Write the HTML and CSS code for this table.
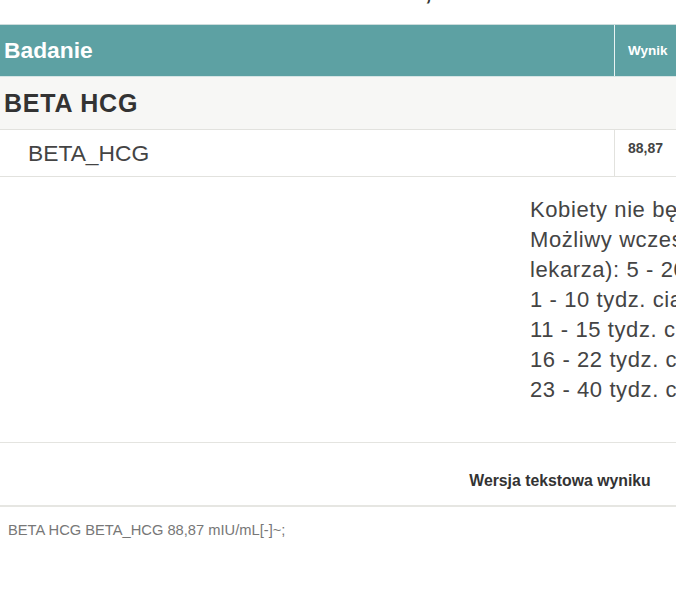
FILE: index.html
```html
<!DOCTYPE html>
<html lang="pl">
<head>
<meta charset="utf-8">
<title>Wynik badania BETA HCG</title>
<link rel="stylesheet" href="styles.css">
</head>
<body>
<div class="page">
  <h1 class="title">Dane badań, BETA HCG</h1>
  <div class="results">
    <div class="row head">
      <div class="cell name">Badanie</div>
      <div class="cell value">Wynik</div>
    </div>
    <div class="row group">
      <div class="cell name">BETA HCG</div>
      <div class="cell value"></div>
    </div>
    <div class="row item">
      <div class="cell name">BETA_HCG</div>
      <div class="cell value">88,87</div>
    </div>
  </div>
  <div class="norms">
    <div class="norm-text">Kobiety nie będące w ciąży: &lt; 5,0<br>Możliwy wczesny okres ciąży (potwierdzić u<br>lekarza): 5 - 20<br>1 - 10 tydz. ciąży: 202 - 231000<br>11 - 15 tydz. ciąży: 22536 - 234990<br>16 - 22 tydz. ciąży: 8007 - 50064<br>23 - 40 tydz. ciąży: 1600 - 49413</div>
  </div>
  <div class="version">Wersja tekstowa wyniku</div>
  <div class="plain">BETA HCG BETA_HCG 88,87 mIU/mL[-]~;</div>
</div>
</body>
</html>
```
FILE: styles.css
```css
html, body {
  margin: 0;
  padding: 0;
  background: #ffffff;
  overflow: hidden;
}
body {
  font-family: "Liberation Sans", Arial, Helvetica, sans-serif;
  color: #444;
}
.page {
  width: 1120px;
}
.title {
  margin: -23px 0 17px 289px;
  font-size: 24px;
  line-height: 30px;
  font-weight: bold;
  color: #333;
  white-space: nowrap;
}
.results {
  border-top: 1px solid #cddcdc;
}
.row {
  display: grid;
  grid-template-columns: 614px 1fr;
}
.cell {
  display: flex;
  align-items: center;
}
.head {
  background: #5da1a3;
  height: 51px;
  border-bottom: 1px solid #d6e5e5;
  color: #fff;
}
.head .name {
  padding-left: 4px;
  font-size: 22.8px;
  font-weight: bold;
}
.head .value {
  border-left: 1px solid #e9f3f3;
  padding-left: 13px;
  font-size: 13.5px;
  font-weight: bold;
}
.group {
  background: #f7f7f5;
  height: 52px;
  border-bottom: 1px solid #e2e2de;
}
.group .name {
  padding-left: 4px;
  font-size: 25px;
  font-weight: bold;
  letter-spacing: 0.8px;
  color: #333;
}
.item {
  height: 46px;
  border-bottom: 1px solid #e2e2de;
}
.item .name {
  padding-left: 28px;
  font-size: 22.8px;
  color: #444;
}
.item .value {
  align-items: flex-start;
  border-left: 1px solid #e2e2de;
  padding: 10px 13px 0;
  font-size: 14px;
  line-height: 16px;
  font-weight: bold;
  color: #444;
}
.norms {
  padding: 18px 0 37px 530px;
  border-bottom: 1px solid #e4e4e0;
}
.norm-text {
  font-size: 22px;
  letter-spacing: 0.6px;
  line-height: 30px;
  white-space: nowrap;
  color: #444;
}
.version {
  text-align: center;
  padding: 29px 0 15px;
  font-size: 15.8px;
  line-height: 18px;
  font-weight: bold;
  color: #333;
  border-bottom: 2px solid #e6e6e2;
}
.plain {
  padding: 14px 0 0 8px;
  font-size: 14.7px;
  line-height: 18px;
  color: #777;
}
```
